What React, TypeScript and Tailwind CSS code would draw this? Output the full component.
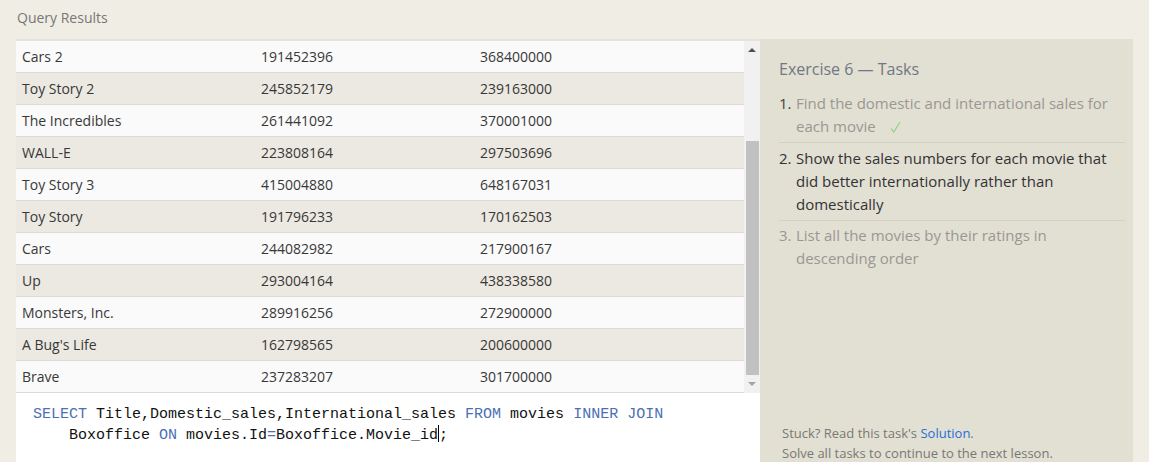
import React from 'react';

const rows: [string, string, string][] = [
  ['Cars 2', '191452396', '368400000'],
  ['Toy Story 2', '245852179', '239163000'],
  ['The Incredibles', '261441092', '370001000'],
  ['WALL-E', '223808164', '297503696'],
  ['Toy Story 3', '415004880', '648167031'],
  ['Toy Story', '191796233', '170162503'],
  ['Cars', '244082982', '217900167'],
  ['Up', '293004164', '438338580'],
  ['Monsters, Inc.', '289916256', '272900000'],
  ["A Bug's Life", '162798565', '200600000'],
  ['Brave', '237283207', '301700000'],
];

function Scrollbar() {
  return (
    <div className="w-[16px] bg-[#f1f1f1] flex flex-col items-center">
      <div className="h-[18px] flex items-center justify-center">
        <div className="w-0 h-0 border-l-[4px] border-r-[4px] border-b-[4px] border-l-transparent border-r-transparent border-b-[#505050]" />
      </div>
      <div className="h-[82px]" />
      <div className="w-[13px] h-[234px] bg-[#c1c1c1]" />
      <div className="flex-1 flex items-center justify-center">
        <div className="w-0 h-0 border-l-[4px] border-r-[4px] border-t-[4px] border-l-transparent border-r-transparent border-t-[#a3a3a3]" />
      </div>
    </div>
  );
}

export default function App() {
  return (
    <div className="w-[1149px] h-[462px] overflow-hidden bg-[#f0ede5] font-['Open_Sans',sans-serif] text-[#333]">
      <div className="h-[39px] pl-[17px] pt-[7px] text-[14px] text-[#777]">Query Results</div>
      <div className="flex ml-[16px] w-[1117px] h-[423px]">
        <div className="w-[744px] flex flex-col">
          <div className="flex h-[354px] border-t-2 border-[#e6e3db]">
            <div className="flex-1 flex flex-col">
              {rows.map((r, i) => (
                <div
                  key={i}
                  className={`flex items-center h-[32px] border-b border-[#dddbd4] text-[14px] text-[#383838] ${
                    i % 2 === 0 ? 'bg-[#fafafa]' : 'bg-[#ebe9e1]'
                  }`}
                >
                  <div className="w-[245px] pl-[6px]">{r[0]}</div>
                  <div className="w-[219px]">{r[1]}</div>
                  <div className="flex-1">{r[2]}</div>
                </div>
              ))}
            </div>
            <Scrollbar />
          </div>
          <div className="flex-1 bg-white pl-[17px] pt-[11px] font-['Liberation_Mono',monospace] text-[15px] leading-[21px] text-[#111]">
            <div>
              <span className="text-[#4b6fb6]">SELECT</span> Title,Domestic_sales,International_sales{' '}
              <span className="text-[#4b6fb6]">FROM</span> movies <span className="text-[#4b6fb6]">INNER JOIN</span>
            </div>
            <div className="pl-[36px]">
              Boxoffice <span className="text-[#4b6fb6]">ON</span> movies.Id<span className="text-[#4b6fb6]">=</span>
              Boxoffice.Movie_id<span className="inline-block w-[1px] h-[17px] bg-black align-[-3px]" />;
            </div>
          </div>
        </div>
        <div className="flex-1 bg-[#e2dfd3] flex flex-col pl-[19px] pr-[8px]">
          <div className="pt-[19px] text-[16px] text-[#6f7885] leading-[22px]">Exercise 6 — Tasks</div>
          <ol className="mt-[12px] text-[15px] leading-[23px]">
            <li className="flex pb-[4px] border-b border-[#d3d0c4] text-[#9a9892]">
              <span className="w-[17px] shrink-0 text-[#444]">1.</span>
              <span>
                Find the domestic and international sales for each movie
                <svg width="11" height="12" viewBox="0 0 11 12" className="inline-block ml-[14px] align-[-1px]">
                  <path d="M1 7.5 L3.8 11 L10 1" fill="none" stroke="#8fd08f" strokeWidth="1.2" />
                </svg>
              </span>
            </li>
            <li className="flex pt-[4px] pb-[4px] border-b border-[#d3d0c4] text-[#333]">
              <span className="w-[17px] shrink-0">2.</span>
              <span>Show the sales numbers for each movie that did better internationally rather than domestically</span>
            </li>
            <li className="flex pt-[3px] text-[#9a9892]">
              <span className="w-[17px] shrink-0">3.</span>
              <span>List all the movies by their ratings in descending order</span>
            </li>
          </ol>
          <div className="mt-auto pl-[3px] text-[13px] leading-[20px] text-[#7a7873]">
            <div>
              Stuck? Read this task's <span className="text-[#1f6fd6]">Solution</span>.
            </div>
            <div className="h-[19px]">Solve all tasks to continue to the next lesson.</div>
          </div>
        </div>
      </div>
    </div>
  );
}
